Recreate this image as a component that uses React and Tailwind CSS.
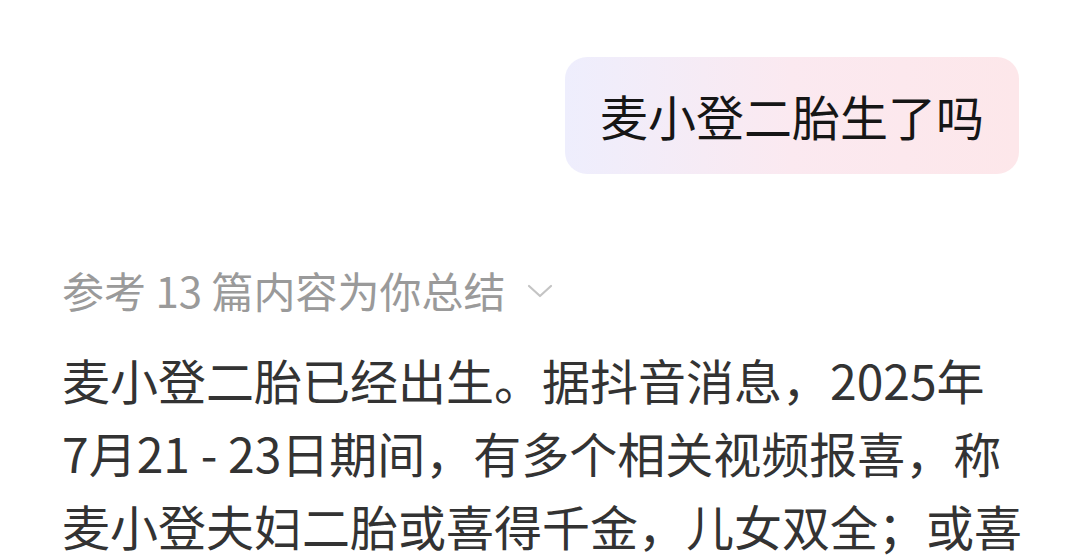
export default function App() {
  return (
    <div
      className="w-[1080px] h-[556px] overflow-hidden bg-white"
      style={{ fontFamily: '"Noto Sans CJK SC", "Noto Sans", sans-serif' }}
    >
      {/* question bubble */}
      <div className="flex justify-end pt-[57px] pr-[61px]">
        <div className="w-[454px] h-[117px] rounded-[22px] bg-gradient-to-r from-[#eeeefd] via-[#fbe9f0] to-[#fde7ea] flex items-center justify-center">
          <span className="text-[48px] leading-none text-[#161616] mt-[-2px]">麦小登二胎生了吗</span>
        </div>
      </div>

      {/* reference line */}
      <div className="flex items-center pl-[62px] mt-[94px] h-[44px]">
        <span className="text-[42px] leading-none text-[#9a9a9a]">参考 13 篇内容为你总结</span>
        <svg width="26" height="16" viewBox="0 0 26 16" className="ml-[22px] mt-[2px]">
          <path d="M2 3 L13 13 L24 3" fill="none" stroke="#c4c4c4" strokeWidth="2.2" strokeLinecap="round" strokeLinejoin="round" />
        </svg>
      </div>

      {/* answer */}
      <p className="pl-[62px] pr-[54px] mt-[31px] text-[48px] leading-[73px] text-[#333333]">
        麦小登二胎已经出生。据抖音消息，2025年<span className="whitespace-nowrap">7月21</span> - 23日期间，有多个相关视频报喜，称麦小登夫妇二胎或喜得千金，儿女双全；或喜得贵子，凑成一个好字。
      </p>
    </div>
  );
}
